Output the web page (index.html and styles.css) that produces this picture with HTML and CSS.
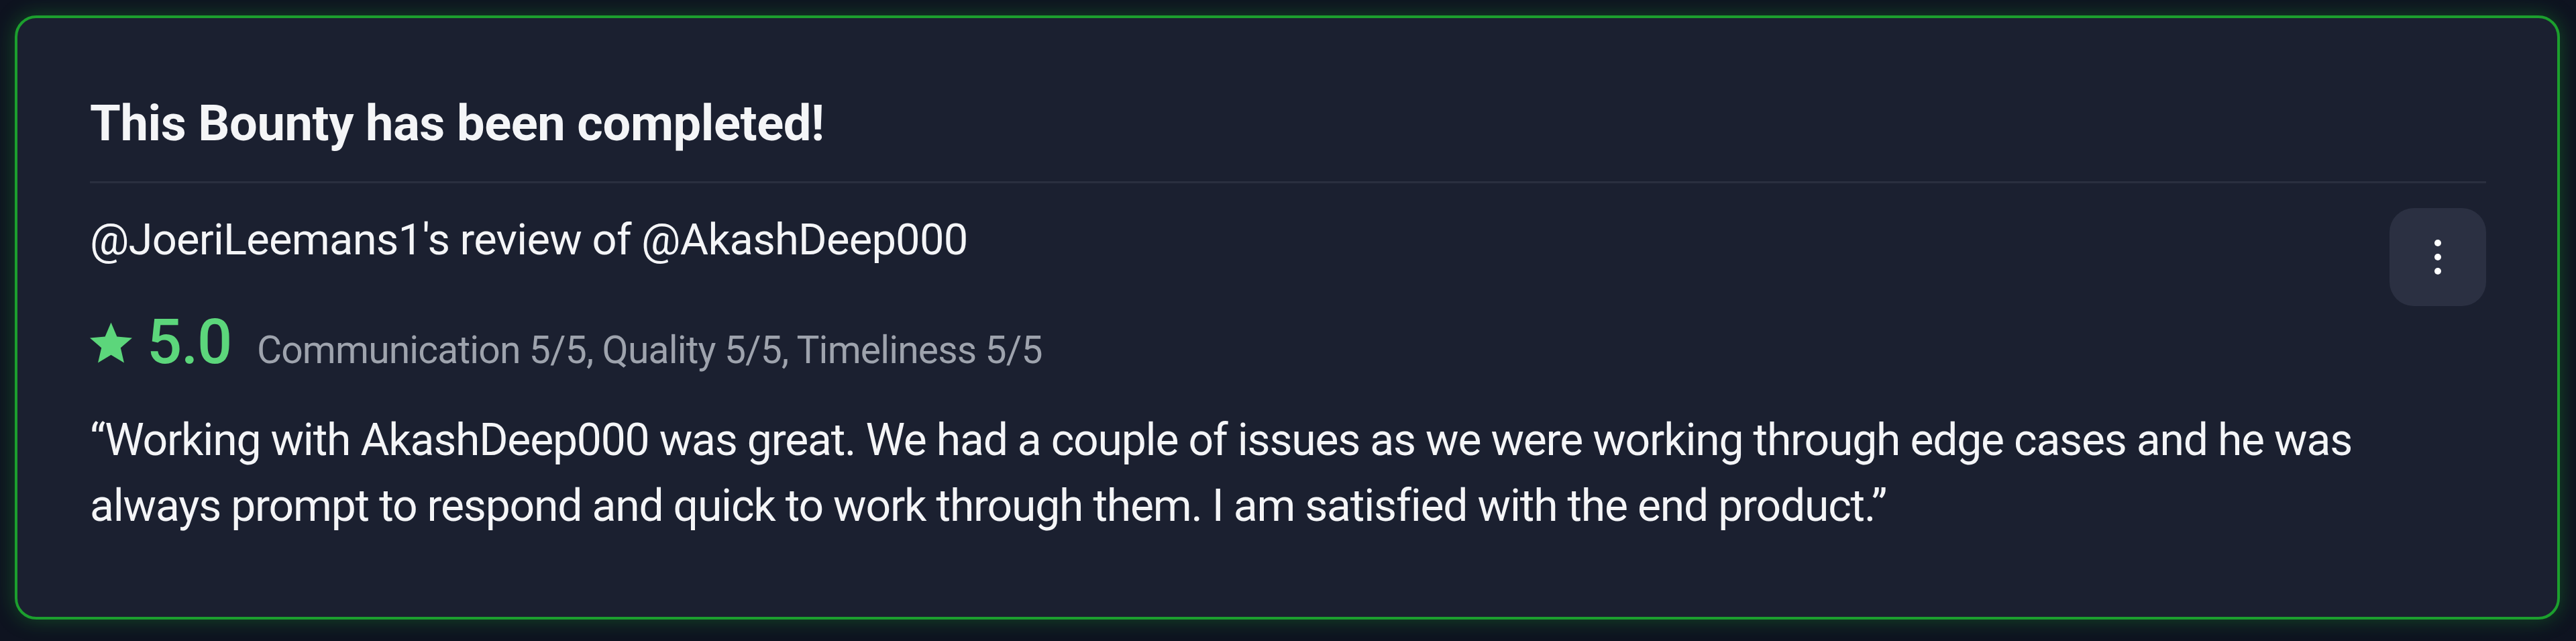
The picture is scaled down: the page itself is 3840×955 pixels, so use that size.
FILE: index.html
```html
<!DOCTYPE html>
<html lang="en">
<head>
<meta charset="utf-8">
<title>Bounty review</title>
<link rel="stylesheet" href="styles.css">
</head>
<body>
<div class="card">
  <h2 class="title">This Bounty has been completed!</h2>
  <div class="divider"></div>
  <div class="review">
    <div class="review-main">
      <div class="reviewer">@JoeriLeemans1's review of @AkashDeep000</div>
      <div class="rating">
        <svg class="star" viewBox="2 2 20 19" aria-hidden="true"><path d="M12 17.27L18.18 21l-1.64-7.03L22 9.24l-7.19-.61L12 2 9.19 8.63 2 9.24l5.46 4.73L5.82 21z"/></svg>
        <span class="score">5.0</span>
        <span class="breakdown">Communication 5/5, Quality 5/5, Timeliness 5/5</span>
      </div>
      <p class="quote">“Working with AkashDeep000 was great. We had a couple of issues as we were working through edge cases and he was always prompt to respond and quick to work through them. I am satisfied with the end product.”</p>
    </div>
    <button class="more" aria-label="More options">
      <svg viewBox="0 0 10 52" aria-hidden="true"><circle cx="5" cy="5" r="5"/><circle cx="5" cy="26" r="5"/><circle cx="5" cy="47" r="5"/></svg>
    </button>
  </div>
</div>
</body>
</html>
```
FILE: styles.css
```css
* { box-sizing: border-box; }
html, body { margin: 0; padding: 0; }
body {
  background: #0e1320;
  width: 3840px;
  height: 955px;
  overflow: hidden;
  font-family: Roboto, "Liberation Sans", sans-serif;
  color: #f4f5f7;
}
.card {
  margin: 23px 24px 0 22px;
  height: 900px;
  border: 4px solid #1c9f2e;
  border-radius: 32px;
  background: #1b2030;
  box-shadow: 0 0 30px rgba(28, 159, 46, 0.4);
  padding: 112px 106px 0 108px;
}
.title {
  margin: 0;
  font-size: 74px;
  line-height: 90px;
  font-weight: 700;
  letter-spacing: -0.4px;
}
.divider {
  margin-top: 41px;
  height: 3px;
  background: #2a2f3f;
}
.review {
  margin-top: 37px;
  display: flex;
  align-items: flex-start;
  gap: 24px;
}
.review-main { flex: 1; padding-top: 7px; }
.reviewer { font-size: 65px; line-height: 80px; letter-spacing: -0.75px; }
.rating {
  margin-top: 63px;
  height: 100px;
  display: flex;
  align-items: baseline;
}
.star { width: 63px; height: 61px; fill: #5cd67b; align-self: center; margin-right: 22px; }
.score { font-size: 92px; line-height: 100px; font-weight: 500; color: #5cd67b; letter-spacing: -1.4px; }
.breakdown { font-size: 57px; color: #9ea3ad; margin-left: 38px; letter-spacing: -0.85px; }
.quote {
  margin: 47px 0 0;
  font-size: 66px;
  line-height: 98px;
  letter-spacing: -1.2px;
}
.more {
  width: 144px;
  height: 146px;
  border: 0;
  border-radius: 36px;
  background: #2b3042;
  display: flex;
  align-items: center;
  justify-content: center;
  padding: 0;
  flex: none;
}
.more svg { width: 10px; height: 52px; fill: #ffffff; }
```
